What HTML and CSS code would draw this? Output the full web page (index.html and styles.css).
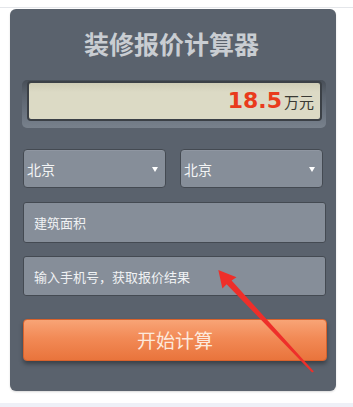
FILE: index.html
```html
<!DOCTYPE html>
<html lang="zh">
<head>
<meta charset="utf-8">
<title>装修报价计算器</title>
<link rel="stylesheet" href="styles.css">
</head>
<body>
<div class="topline"></div>
<div class="panel">
  <div class="title">装修报价计算器</div>
  <div class="well">
    <div class="display"><span class="num">18.5</span><span class="unit">万元</span></div>
  </div>
  <div class="selects">
    <div class="select"><span>北京</span><span class="caret"></span></div>
    <div class="select"><span>北京</span><span class="caret"></span></div>
  </div>
  <div class="field f1">建筑面积</div>
  <div class="field f2">输入手机号，获取报价结果</div>
  <div class="btn">开始计算</div>
</div>
<div class="band"></div>
<svg class="arrow" width="353" height="407" viewBox="0 0 353 407">
  <polygon points="218.3,270 236.5,277.2 231.6,280.6 313.9,371.6 312.1,372.6 226.6,284.2 222.4,288.4" fill="#ee2f2a"/>
</svg>
</body>
</html>
```
FILE: styles.css
```css
html, body { margin: 0; padding: 0; }
body {
  width: 353px;
  height: 407px;
  background: #ffffff;
  font-family: "Noto Sans CJK SC", "Noto Sans", sans-serif;
  position: relative;
  overflow: hidden;
}
.topline {
  margin-top: 7px;
  height: 1px;
  background: #e4e6ea;
}
.panel {
  margin: 1px 0 0 10px;
  width: 326px;
  height: 382px;
  box-sizing: border-box;
  background: #5a626d;
  border-radius: 6px;
  padding: 19px 10px 0 13px;
  box-shadow: 0 1px 2px rgba(0,0,0,0.15);
}
.title {
  margin-left: -3px;
  text-align: center;
  color: #c9cdd2;
  font-size: 25px;
  font-weight: 700;
  line-height: 30px;
  height: 30px;
  margin-right: 3px;
}
.well {
  margin-top: 22px;
  margin-left: -1px;
  width: 304px;
  height: 48px;
  box-sizing: border-box;
  padding: 1px 4px 7px 5px;
  border-radius: 5px;
  background: linear-gradient(#474e57 0, #5b636e 30%, #6b7480 70%, #78818c 100%);
}
.display {
  height: 40px;
  box-sizing: border-box;
  border: 2px solid #3b4046;
  border-radius: 4px;
  background: linear-gradient(#cfcdb6, #dcdac5 25%, #dcdac5);
  display: flex;
  justify-content: flex-end;
  align-items: baseline;
  padding: 0 6px 0 0;
  line-height: 36px;
}
.num {
  font-family: "DejaVu Sans", sans-serif;
  font-weight: 700;
  font-size: 22px;
  color: #e93a1c;
}
.unit {
  font-size: 15px;
  color: #3a3a34;
  margin-left: 2px;
}
.selects {
  margin-top: 21px;
  display: flex;
  gap: 14px;
}
.select {
  width: 143px;
  height: 39px;
  box-sizing: border-box;
  background: #868e99;
  border: 1px solid #444a52;
  border-radius: 4px;
  box-shadow: inset 0 1px 0 rgba(255,255,255,0.08);
  display: flex;
  align-items: center;
  justify-content: space-between;
  padding: 0 7px 0 3px;
  color: #f3f4f5;
  font-size: 14px;
}
.caret {
  width: 0;
  height: 0;
  border-left: 3px solid transparent;
  border-right: 3px solid transparent;
  border-top: 5px solid #ffffff;
  margin-top: 1px;
}
.field {
  width: 303px;
  box-sizing: border-box;
  background: #868e99;
  border: 1px solid #444a52;
  border-radius: 3px;
  color: #f0f2f4;
  font-size: 13px;
  padding-left: 10px;
  display: flex;
  align-items: center;
}
.f1 { margin-top: 14px; height: 41px; }
.f2 { margin-top: 13px; height: 40px; }
.btn {
  margin-top: 23px;
  width: 304px;
  height: 42px;
  box-sizing: border-box;
  border-radius: 4px;
  border: 1px solid #d8622c;
  background: linear-gradient(#f8a476 0, #f28a56 45%, #e9743c 100%);
  box-shadow: 0 3px 4px rgba(0,0,0,0.35);
  color: #fde9dc;
  font-size: 19px;
  text-align: center;
  line-height: 40px;
}
.band {
  position: absolute;
  left: 0;
  right: 0;
  top: 403px;
  height: 4px;
  background: #eef0f7;
}
.arrow {
  position: absolute;
  left: 0;
  top: 0;
  pointer-events: none;
}
```
